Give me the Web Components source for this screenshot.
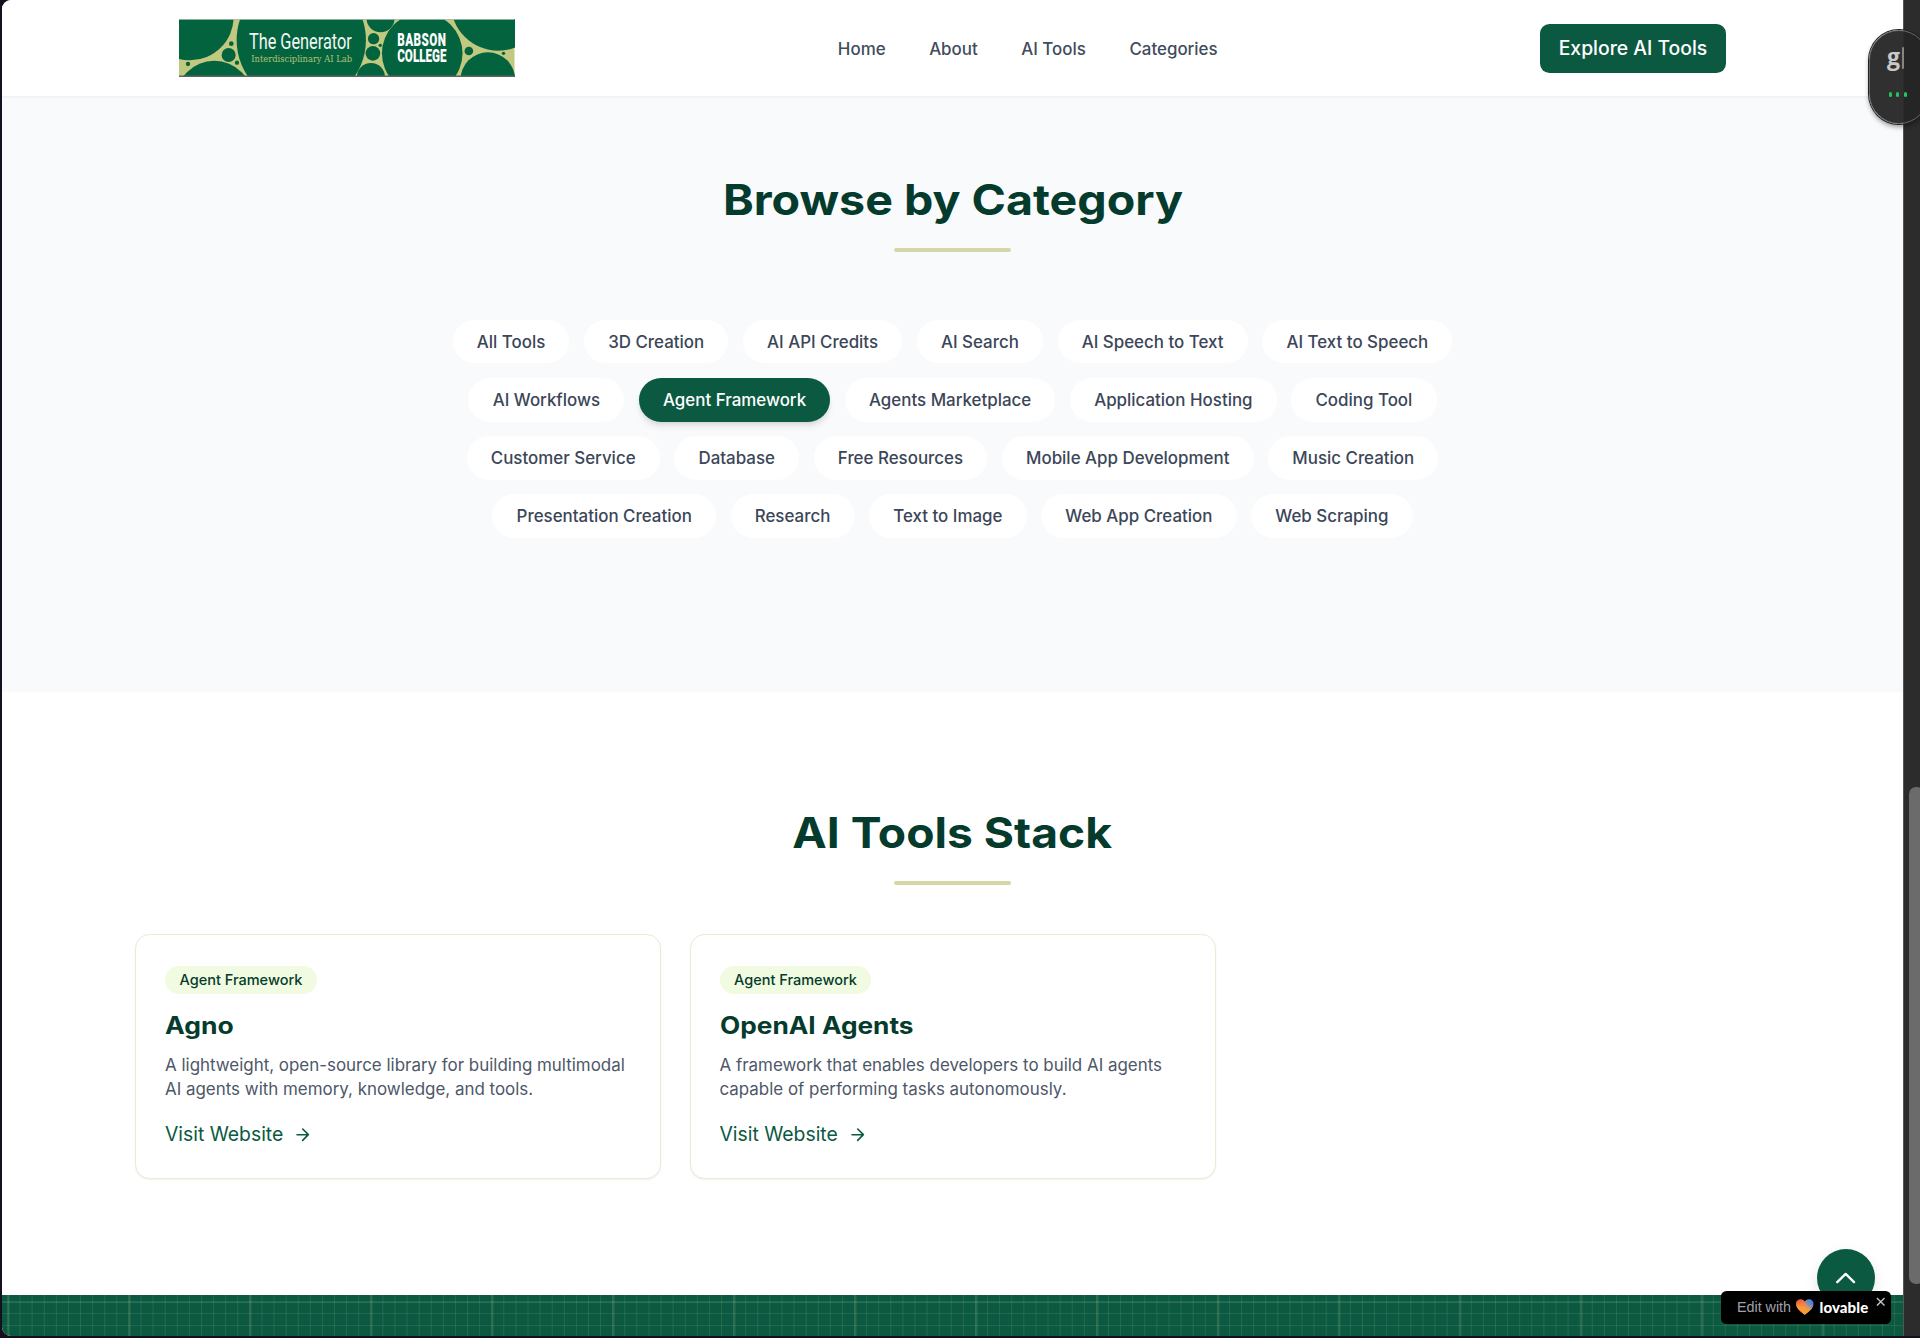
<!DOCTYPE html>
<html lang="en">
<head>
<meta charset="utf-8">
<title>The Generator – AI Tools</title>
<style>
html{font-size:19.36px}
body{margin:0;background:#15101d;font-family:Inter,"Liberation Sans",sans-serif;overflow:hidden}
</style>
</head>
<body>
<app-window></app-window>
<script>
const define=(name,html,setup)=>customElements.define(name,class extends HTMLElement{
  constructor(){super();this.attachShadow({mode:'open'}).innerHTML=html;}
  connectedCallback(){if(setup)setup(this,this.shadowRoot);}
});
// Stretches a heading horizontally to the width named in the host's "fit" attribute.
const fitWidth=(host,node)=>{const w=node.offsetWidth;if(w)node.style.transform=`scaleX(${parseFloat(host.getAttribute('fit'))/w})`;};

define('lab-logo',`<style>:host{display:block;width:335.5px;height:58px}svg{display:block;width:100%;height:100%}
.bc{width:240px;font:900 53px/45.5px Roboto;color:#fff;transform:scaleX(.66);transform-origin:0 0}
.bc::first-line{letter-spacing:2px}</style>
<svg viewBox="27 27 1007 174" preserveAspectRatio="none">
<rect x="27" y="27" width="1007" height="174" fill="#c1c87f"/>
<g fill="#04633f">
<circle cx="60" cy="20" r="131"/><circle cx="133" cy="268.500" r="116"/><circle cx="394" cy="90" r="194"/>
<circle cx="184" cy="101" r="7"/><circle cx="176" cy="135" r="21"/><circle cx="201" cy="158" r="6.500"/><circle cx="54" cy="162" r="6.500"/>
<circle cx="632" cy="25" r="42"/><circle cx="611" cy="86" r="17"/><circle cx="631" cy="106" r="5"/><circle cx="609" cy="130" r="22"/><circle cx="603" cy="201" r="42"/>
<circle cx="757" cy="130" r="121"/><circle cx="985" cy="-20" r="142"/><circle cx="897" cy="123" r="13"/><circle cx="1001" cy="130" r="5"/><circle cx="954" cy="209" r="82"/>
</g>
<rect x="27" y="27" width="1007" height="2.500" fill="#a9bfb2"/><rect x="27" y="196.500" width="1007" height="4.500" fill="#5f6360"/>
<text data-x="237" data-y="117" data-w="309" font-family="Roboto" font-size="65" fill="#f2f7f3">The Generator</text>
<text data-x="244" data-y="156.5" data-w="303" font-family="DejaVu Serif" font-size="25" fill="#b4c272">Interdisciplinary AI Lab</text>
<foreignObject x="682" y="69" width="250" height="100"><div class="bc">BABSON COLLEGE</div></foreignObject>
</svg>`,(el,root)=>root.querySelectorAll('text').forEach(t=>{
  const {x,y,w}=t.dataset;t.setAttribute('transform',`translate(${x} ${y}) scale(${w/t.getComputedTextLength()} 1)`);
}));

define('site-header',`<style>
:host{display:flex;justify-content:center;height:97px;box-sizing:border-box;background:#fff;border-bottom:1px solid #eff1f3;box-shadow:0 1px 2px rgba(0,0,0,.03);position:relative}
.in{width:1547px;padding-top:1px;display:flex;align-items:center;justify-content:space-between}
lab-logo{margin-bottom:1.500px}
nav{display:flex;gap:43.560px;font-size:.874rem;font-weight:500;color:#414c5d;margin-left:1px}
button{font:500 1rem Inter;color:#fff;background:#0b5941;border:0;border-radius:9.500px;height:48.400px;width:186px;padding:0;white-space:nowrap}
</style><div class="in"><lab-logo></lab-logo><nav><span>Home</span><span>About</span><span>AI Tools</span><span>Categories</span></nav><button>Explore AI Tools</button></div>`);

define('section-title',`<style>
:host{display:flex;flex-direction:column;align-items:center}
h2{margin:0;font:750 42.500px/48px Inter;color:#053b2c;white-space:nowrap}
i{width:6rem;height:4.840px;border-radius:3px;background:#d4d8a6;margin-top:24px}
</style><h2><slot></slot></h2><i></i>`,(el,root)=>fitWidth(el,root.querySelector('h2')));

define('category-pill',`<style>
:host{display:flex;align-items:center;height:2.25rem;padding:0 1.25rem;border-radius:2rem;background:#fff;color:#3b4658;font-size:.874rem;font-weight:500;white-space:nowrap}
:host([active]){background:#0b5941;color:#fff;box-shadow:0 5px 7px -1px rgba(0,0,0,.1),0 2px 5px -2px rgba(0,0,0,.1)}
</style><slot></slot>`);

define('category-browser',`<style>
:host{display:flex;flex-direction:column;align-items:center;height:595px;box-sizing:border-box;padding-top:78.500px;background:#f9fafc}
.list{display:flex;flex-wrap:wrap;justify-content:center;gap:14.520px;width:56rem;margin-top:67.600px}
</style><section-title fit="460">Browse by Category</section-title><div class="list"></div>`,(el,root)=>{
  const list=root.querySelector('.list');
  ['All Tools','3D Creation','AI API Credits','AI Search','AI Speech to Text','AI Text to Speech','AI Workflows','Agent Framework','Agents Marketplace','Application Hosting','Coding Tool','Customer Service','Database','Free Resources','Mobile App Development','Music Creation','Presentation Creation','Research','Text to Image','Web App Creation','Web Scraping'].forEach(n=>{
    const p=document.createElement('category-pill');p.textContent=n;if(n==='Agent Framework')p.setAttribute('active','');list.append(p);
  });
});

define('tool-card',`<style>
:host{display:flex;flex-direction:column;align-items:flex-start;box-sizing:border-box;height:245px;padding:31.500px 29px 0;border:1.210px solid #e9ebd2;border-radius:14.500px;background:#fff;box-shadow:0 1px 2px rgba(0,0,0,.06)}
.tag{display:flex;align-items:center;height:28px;padding:0 14.500px;border-radius:14px;background:#f1fbe1;color:#053b2c;font-size:.75rem;font-weight:500}
h3{margin:17px 0 0;font:750 23.600px/30px Inter;color:#053b2c;transform-origin:0 50%}
p{margin:12px 0 0;font-size:.8745rem;line-height:24px;color:#4d5768;white-space:nowrap}
a{display:flex;align-items:center;gap:10px;margin-top:18.400px;font-size:1rem;line-height:29px;color:#0b5941}
svg{width:19.400px;height:19.400px;margin-top:1px}
</style><span class="tag">Agent Framework</span><h3><slot name="title"></slot></h3><p><slot></slot></p><a><span>Visit Website</span><svg viewBox="0 0 24 24" fill="none" stroke="currentColor" stroke-width="2" stroke-linecap="round" stroke-linejoin="round"><path d="M5 12h14M12 5l7 7-7 7"/></svg></a>`,(el,root)=>fitWidth(el,root.querySelector('h3')));

define('tools-stack',`<style>
:host{display:flex;flex-direction:column;align-items:center;height:603px;box-sizing:border-box;padding-top:116.500px;background:#fff}
.grid{display:grid;grid-template-columns:repeat(3,1fr);gap:28.500px;width:1635px;margin-top:48.500px}
</style><section-title fit="319.500">AI Tools Stack</section-title><div class="grid">
<tool-card fit="68.500"><span slot="title">Agno</span>A lightweight, open-source library for building multimodal<br>AI agents with memory, knowledge, and tools.</tool-card>
<tool-card fit="193.500"><span slot="title">OpenAI Agents</span>A framework that enables developers to build AI agents<br>capable of performing tasks autonomously.</tool-card></div>`);

define('site-footer',`<style>
:host{display:block;flex:1;background-color:#0b5941;
background-image:linear-gradient(90deg,rgba(212,216,166,.15) 1.800px,transparent 1.800px),linear-gradient(rgba(212,216,166,.16) 1.500px,transparent 1.500px),linear-gradient(90deg,rgba(212,216,166,.13) 1.200px,transparent 1.200px),linear-gradient(rgba(212,216,166,.13) 1.200px,transparent 1.200px);
background-size:121px 121px,121px 121px,12.100px 12.100px,12.100px 12.100px;background-position:5.500px 6px}
</style>`);

define('scroll-rail',`<style>
:host{display:flex;flex-direction:column;width:17px;box-sizing:border-box;background:#2c2c2c;border-left:1px solid #555;padding:787px 0 0 5px}
i{height:497px;width:15px;border-radius:7px;background:#6b6b6b}
</style><i></i>`);

define('assistant-pill',`<style>
:host{position:absolute;left:1868.500px;top:29.500px;width:60px;height:94.500px;box-sizing:border-box;border-radius:30px;background:linear-gradient(90deg,#303030 33px,#252525 34px);border:1.500px solid #666;box-shadow:0 0 0 1px #222,0 3px 5px rgba(0,0,0,.4);display:flex;flex-direction:column;padding:13px 0 0 17.500px}
.g{display:flex;align-items:center;height:28px;gap:1.500px;color:#c8c8c8}
.g span{font:700 23px/26px "Open Sans";margin-top:-3px}
.g i{width:2.500px;height:22px;background:#858585;border-radius:1px;margin-top:1px}
.d{display:flex;gap:4.500px;margin-top:20.500px;padding-left:1.500px}.d i{width:3.200px;height:4.800px;border-radius:1.500px;background:#22c55e}
</style><div class="g"><span>g</span><i></i></div><div class="d"><i></i><i></i><i></i></div>`);

define('back-to-top',`<style>
:host{position:absolute;left:1816.500px;top:1249.300px;width:58px;height:58px;border-radius:50%;background:#0b5941;display:flex;align-items:center;justify-content:center;box-shadow:0 5px 14px rgba(0,0,0,.1)}
svg{width:28px;height:28px}</style><svg viewBox="0 0 24 24" fill="none" stroke="#fff" stroke-width="2" stroke-linecap="round" stroke-linejoin="round"><path d="m4.500 15.500 7.200-7 7.200 7"/></svg>`);

define('lovable-badge',`<style>
:host{position:absolute;left:1721px;top:1290.500px;width:170px;height:33.500px;box-sizing:border-box;border-radius:5.500px;background:#000;display:flex;align-items:center;padding-left:16px;white-space:nowrap}
.e{font:400 14.300px "Liberation Sans";color:#a1a1aa;width:59px}
.h{width:17.500px;height:16px;margin-right:6px}
.l{font:900 15px Lato;color:#fff;width:50px;letter-spacing:.1px}
.x{width:9.500px;height:9.500px;align-self:flex-start;margin:6px 0 0 6px}
</style><span class="e">Edit with</span><svg class="h" viewBox="0 0 18 16"><defs><linearGradient id="a" x1="0" y1=".1" x2="1" y2=".15"><stop offset="0" stop-color="#f0453a"/><stop offset=".45" stop-color="#f5784e"/><stop offset=".7" stop-color="#4a94d8"/><stop offset="1" stop-color="#4b73ff"/></linearGradient><linearGradient id="b" x1=".35" y1="1" x2=".6" y2="0"><stop offset=".1" stop-color="#ff9f24"/><stop offset=".45" stop-color="#ff9f35" stop-opacity=".85"/><stop offset=".85" stop-color="#ff8a45" stop-opacity="0"/></linearGradient></defs><path d="M9 16C7 14 0 10 0 4.800C0 1.500 2.200 0 4.600 0C6.700 0 8.200 1 9 2.500C9.800 1 11.300 0 13.400 0C15.800 0 18 1.500 18 4.800C18 10 11 14 9 16Z" fill="url(#a)"/><path d="M9 16C7 14 0 10 0 4.800C0 1.500 2.200 0 4.600 0C6.700 0 8.200 1 9 2.500C9.800 1 11.300 0 13.400 0C15.800 0 18 1.500 18 4.800C18 10 11 14 9 16Z" fill="url(#b)"/></svg><span class="l">lovable</span><svg class="x" viewBox="0 0 10 10" stroke="#c0c0c6" stroke-width="1.500"><path d="M1 1l8 8M9 1l-8 8"/></svg>`);

define('app-window',`<style>
:host{display:flex;width:1920px;height:1338px;box-sizing:border-box;padding:0 0 2px 2px;position:relative;overflow:hidden;background:#15101d}
main{width:1901px;display:flex;flex-direction:column;border-radius:9px 0 0 9px;overflow:hidden;background:#fff}
</style><main><site-header></site-header><category-browser></category-browser><tools-stack></tools-stack><site-footer></site-footer></main><scroll-rail></scroll-rail><back-to-top></back-to-top><lovable-badge></lovable-badge><assistant-pill></assistant-pill>`);
</script>
</body>
</html>
